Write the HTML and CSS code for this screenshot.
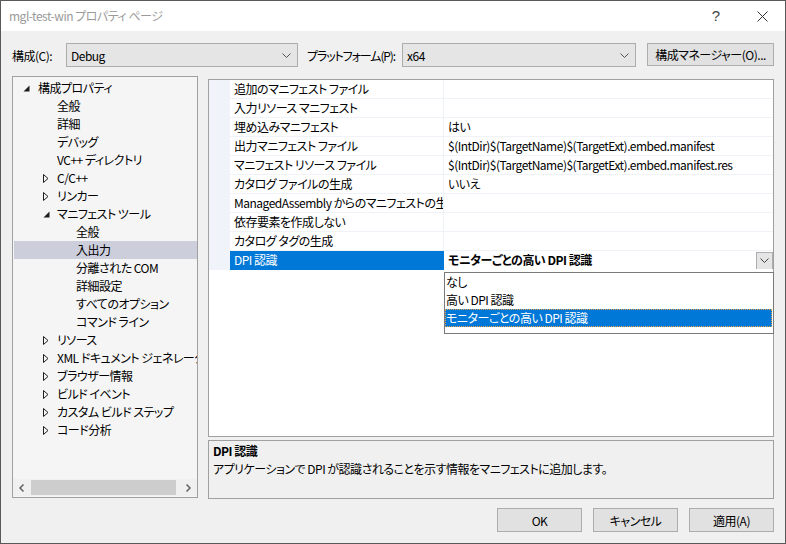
FILE: index.html
```html
<!DOCTYPE html>
<html lang="ja">
<head>
<meta charset="utf-8">
<title>mgl-test-win プロパティ ページ</title>
<link rel="stylesheet" href="styles.css">
</head>
<body>
<div class="window">
  <div class="titlebar">
    <span class="title">mgl-test-win プロパティ ページ</span>
    <span class="cap help">?</span>
    <span class="cap close"><svg width="11" height="11" viewBox="0 0 11 11"><path d="M0.5 0.5 L10.5 10.5 M10.5 0.5 L0.5 10.5" stroke="#333" stroke-width="1" fill="none"/></svg></span>
  </div>

  <div class="toolbar">
    <label class="lbl lbl-config">構成(C):</label>
    <div class="combo combo-config"><span>Debug</span><svg class="chev" width="9" height="5" viewBox="0 0 9 5"><path d="M0.5 0.5 L4.5 4.5 L8.5 0.5" stroke="#555" fill="none"/></svg></div>
    <label class="lbl lbl-platform">プラットフォーム(P):</label>
    <div class="combo combo-platform"><span>x64</span><svg class="chev" width="9" height="5" viewBox="0 0 9 5"><path d="M0.5 0.5 L4.5 4.5 L8.5 0.5" stroke="#555" fill="none"/></svg></div>
    <button class="btn btn-manager">構成マネージャー(O)...</button>
  </div>

  <div class="main">
    <div class="tree">
      <div class="tree-list">
        <div class="node l1"><span class="exp"><svg width="7" height="7" viewBox="0 0 7 7"><path d="M6.5 0.5 V6.5 H0.5 Z" fill="#1e1e1e"/></svg></span>構成プロパティ</div>
        <div class="node l2"><span class="exp"></span>全般</div>
        <div class="node l2"><span class="exp"></span>詳細</div>
        <div class="node l2"><span class="exp"></span>デバッグ</div>
        <div class="node l2"><span class="exp"></span>VC++ ディレクトリ</div>
        <div class="node l2"><span class="exp"><svg width="6" height="9" viewBox="0 0 6 9"><path d="M0.5 0.5 L5 4.5 L0.5 8.5 Z" fill="none" stroke="#1e1e1e"/></svg></span>C/C++</div>
        <div class="node l2"><span class="exp"><svg width="6" height="9" viewBox="0 0 6 9"><path d="M0.5 0.5 L5 4.5 L0.5 8.5 Z" fill="none" stroke="#1e1e1e"/></svg></span>リンカー</div>
        <div class="node l2"><span class="exp"><svg width="7" height="7" viewBox="0 0 7 7"><path d="M6.5 0.5 V6.5 H0.5 Z" fill="#1e1e1e"/></svg></span>マニフェスト ツール</div>
        <div class="node l3"><span class="exp"></span>全般</div>
        <div class="node l3 selected"><span class="exp"></span>入出力</div>
        <div class="node l3"><span class="exp"></span>分離された COM</div>
        <div class="node l3"><span class="exp"></span>詳細設定</div>
        <div class="node l3"><span class="exp"></span>すべてのオプション</div>
        <div class="node l3"><span class="exp"></span>コマンド ライン</div>
        <div class="node l2"><span class="exp"><svg width="6" height="9" viewBox="0 0 6 9"><path d="M0.5 0.5 L5 4.5 L0.5 8.5 Z" fill="none" stroke="#1e1e1e"/></svg></span>リソース</div>
        <div class="node l2"><span class="exp"><svg width="6" height="9" viewBox="0 0 6 9"><path d="M0.5 0.5 L5 4.5 L0.5 8.5 Z" fill="none" stroke="#1e1e1e"/></svg></span>XML ドキュメント ジェネレーター</div>
        <div class="node l2"><span class="exp"><svg width="6" height="9" viewBox="0 0 6 9"><path d="M0.5 0.5 L5 4.5 L0.5 8.5 Z" fill="none" stroke="#1e1e1e"/></svg></span>ブラウザー情報</div>
        <div class="node l2"><span class="exp"><svg width="6" height="9" viewBox="0 0 6 9"><path d="M0.5 0.5 L5 4.5 L0.5 8.5 Z" fill="none" stroke="#1e1e1e"/></svg></span>ビルド イベント</div>
        <div class="node l2"><span class="exp"><svg width="6" height="9" viewBox="0 0 6 9"><path d="M0.5 0.5 L5 4.5 L0.5 8.5 Z" fill="none" stroke="#1e1e1e"/></svg></span>カスタム ビルド ステップ</div>
        <div class="node l2"><span class="exp"><svg width="6" height="9" viewBox="0 0 6 9"><path d="M0.5 0.5 L5 4.5 L0.5 8.5 Z" fill="none" stroke="#1e1e1e"/></svg></span>コード分析</div>
      </div>
      <div class="hscroll">
        <span class="arrow"><svg width="5" height="8" viewBox="0 0 5 8"><path d="M4.5 0.5 L1 4 L4.5 7.5" stroke="#606060" stroke-width="1.5" fill="none"/></svg></span>
        <span class="track"><span class="thumb"></span></span>
        <span class="arrow"><svg width="5" height="8" viewBox="0 0 5 8"><path d="M0.5 0.5 L4 4 L0.5 7.5" stroke="#606060" stroke-width="1.5" fill="none"/></svg></span>
      </div>
    </div>

    <div class="right">
      <div class="grid">
        <div class="row"><span class="gut"></span><span class="name">追加のマニフェスト ファイル</span><span class="val"></span></div>
        <div class="row"><span class="gut"></span><span class="name">入力リソース マニフェスト</span><span class="val"></span></div>
        <div class="row"><span class="gut"></span><span class="name">埋め込みマニフェスト</span><span class="val">はい</span></div>
        <div class="row"><span class="gut"></span><span class="name">出力マニフェスト ファイル</span><span class="val">$(IntDir)$(TargetName)$(TargetExt).embed.manifest</span></div>
        <div class="row"><span class="gut"></span><span class="name">マニフェスト リソース ファイル</span><span class="val">$(IntDir)$(TargetName)$(TargetExt).embed.manifest.res</span></div>
        <div class="row"><span class="gut"></span><span class="name">カタログ ファイルの生成</span><span class="val">いいえ</span></div>
        <div class="row"><span class="gut"></span><span class="name">ManagedAssembly からのマニフェストの生成</span><span class="val"></span></div>
        <div class="row"><span class="gut"></span><span class="name">依存要素を作成しない</span><span class="val"></span></div>
        <div class="row"><span class="gut"></span><span class="name">カタログ タグの生成</span><span class="val"></span></div>
        <div class="row active"><span class="gut"></span><span class="name">DPI 認識</span><span class="val"><b>モニターごとの高い DPI 認識</b><span class="ddbtn"><svg width="9" height="5" viewBox="0 0 9 5"><path d="M0.5 0.5 L4.5 4.5 L8.5 0.5" stroke="#444" fill="none"/></svg></span></span></div>

        <div class="dropdown">
          <div class="opt">なし</div>
          <div class="opt">高い DPI 認識</div>
          <div class="opt chosen">モニターごとの高い DPI 認識</div>
        </div>
      </div>
      <div class="desc">
        <div class="desc-title">DPI 認識</div>
        <div class="desc-text">アプリケーションで DPI が認識されることを示す情報をマニフェストに追加します。</div>
      </div>
    </div>
  </div>

  <div class="footer">
    <button class="btn">OK</button>
    <button class="btn">キャンセル</button>
    <button class="btn">適用(A)</button>
  </div>
</div>
</body>
</html>
```

FILE: styles.css
```css
* { box-sizing: border-box; }

html, body {
  margin: 0;
  padding: 0;
}

body {
  font-family: "Noto Sans CJK JP", "Noto Sans", sans-serif;
  font-size: 12px;
  font-feature-settings: "palt";
  letter-spacing: -0.5px;
  color: #000;
  background: #f0f0f0;
}

.window {
  width: 786px;
  height: 544px;
  border: 1px solid #595959;
  background: #f0f0f0;
  display: flex;
  flex-direction: column;
  overflow: hidden;
}

/* title bar */
.titlebar {
  height: 30px;
  flex: none;
  background: #fff;
  display: flex;
  align-items: center;
  padding-left: 8px;
  line-height: 16px;
}
.title { color: #9a9a9a; flex: 1; }
.cap {
  width: 46px;
  height: 30px;
  display: flex;
  align-items: center;
  justify-content: center;
  color: #333;
}
.help { font-family: "Liberation Sans", sans-serif; font-size: 15px; color: #444; letter-spacing: 0; }

/* toolbar */
.toolbar {
  height: 45px;
  flex: none;
  display: flex;
  align-items: flex-start;
  padding: 12px 11px 0 11px;
}
.lbl {
  height: 24px;
  display: flex;
  align-items: center;
  white-space: nowrap;
  flex: none;
}
.lbl-config { width: 54px; }
.lbl-platform { width: 95px; margin-left: 9px; letter-spacing: -1.1px; }
.combo {
  height: 24px;
  border: 1px solid #adadad;
  background: #e5e5e5;
  display: flex;
  align-items: center;
  padding: 0 6px 0 4px;
  justify-content: space-between;
  flex: none;
}
.combo-config { width: 232px; }
.combo-platform { width: 234px; }

.btn {
  font: inherit;
  font-feature-settings: "palt";
  letter-spacing: -0.5px;
  color: #000;
  height: 24px;
  border: 1px solid #adadad;
  background: #e1e1e1;
  padding: 0;
  display: flex;
  align-items: center;
  justify-content: center;
}
.btn-manager { width: 127px; height: 23px; margin-left: 11px; flex: none; }

/* main */
.main {
  height: 423px;
  flex: none;
  display: flex;
  gap: 10px;
  padding: 0 11px;
}

.tree {
  width: 186px;
  height: 422px;
  border: 1px solid #a0a0a0;
  background: #f5f5f5;
  display: flex;
  flex-direction: column;
}
.tree-list {
  flex: 1;
  padding-top: 2px;
  overflow: hidden;
}
.node {
  height: 18px;
  line-height: 18px;
  display: flex;
  align-items: center;
  white-space: nowrap;
  overflow: hidden;
  margin-left: 1px;
}
.node.l1 { padding-left: 6px; }
.node.l2 { padding-left: 25px; }
.node.l3 { padding-left: 44px; }
.node.selected { background: #cccedb; }
.exp {
  width: 18px;
  flex: none;
  display: flex;
  align-items: center;
  padding-left: 3px;
  height: 18px;
}
.node.l2 .exp { padding-left: 4px; }

.hscroll {
  height: 17px;
  flex: none;
  display: flex;
  align-items: center;
  background: #f0f0f0;
  margin-bottom: 1px;
}
.arrow {
  width: 17px;
  height: 17px;
  display: flex;
  align-items: center;
  justify-content: center;
}
.track {
  flex: 1;
  height: 15px;
  display: flex;
  align-items: center;
}
.thumb {
  display: block;
  width: 145px;
  height: 15px;
  margin-left: 1px;
  background: #cdcdcd;
}

.right {
  width: 566px;
  display: flex;
  flex-direction: column;
  gap: 3px;
  padding-top: 3px;
}

.grid {
  position: relative;
  height: 358px;
  border: 1px solid #a0a0a0;
  background: #fff;
}
.row {
  display: grid;
  grid-template-columns: 21px 214px 1fr;
  height: 19px;
}
.row > span { height: 19px; line-height: 18px; }
.gut { background: #f0f4fa; }
.name {
  padding-left: 4px;
  white-space: nowrap;
  overflow: hidden;
  border-bottom: 1px solid #eff2f7;
  border-right: 1px solid #eff2f7;
}
.val {
  padding-left: 4px;
  white-space: nowrap;
  overflow: hidden;
  border-bottom: 1px solid #eff2f7;
  display: flex;
  align-items: center;
}
.row.active .name {
  background: #0078d7;
  color: #fff;
  border-color: #0078d7;
}
.row.active .val { border-bottom-color: #fff; }
.row.active b { flex: 1; font-weight: bold; }
.ddbtn {
  width: 17px;
  height: 18px;
  border: 1px solid #adadad;
  background: #e5e5e5;
  display: flex;
  align-items: center;
  justify-content: center;
  margin-top: 1px;
}

.dropdown {
  position: absolute;
  left: 235px;
  top: 192px;
  width: 330px;
  height: 62px;
  background: #fff;
  border: 1px solid #7a7a7a;
}
.opt {
  height: 18px;
  line-height: 18px;
  padding-left: 1px;
  white-space: nowrap;
}
.opt.chosen {
  background: #0078d7;
  color: #fff;
  border: 1px dotted #e9a24a;
  line-height: 16px;
  padding-left: 0;
  margin-right: 1px;
}

.desc {
  height: 59px;
  border: 1px solid #a0a0a0;
  background: #f0f0f0;
  padding: 1px 0 0 4px;
}
.desc-title { font-weight: bold; line-height: 18px; }
.desc-text { line-height: 18px; }

.footer {
  flex: none;
  display: flex;
  justify-content: flex-end;
  gap: 11px;
  padding: 9px 11px 0 0;
}
.footer .btn { width: 85px; height: 24px; }
```
